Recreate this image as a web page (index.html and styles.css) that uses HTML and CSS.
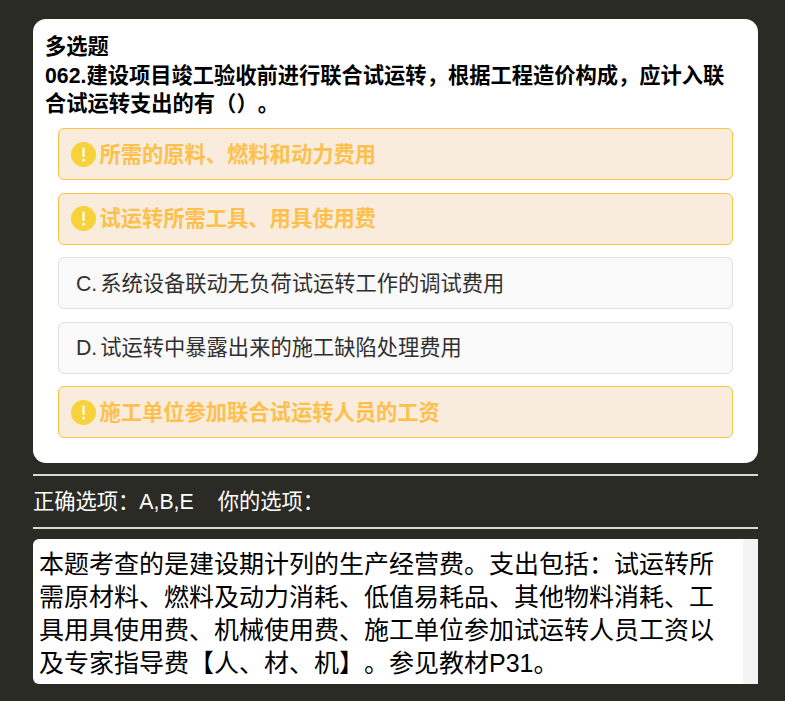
FILE: index.html
```html
<!DOCTYPE html>
<html lang="zh-CN">
<head>
<meta charset="utf-8">
<title>多选题</title>
<link rel="stylesheet" href="styles.css">
</head>
<body>
<main class="page">
  <section class="card">
    <div class="question">多选题<br>062.建设项目竣工验收前进行联合试运转，根据工程造价构成，应计入联合试运转支出的有（）。</div>
    <ul class="options">
      <li class="option correct"><svg class="icon" viewBox="0 0 25 25"><circle cx="12.5" cy="12.5" r="12.5" fill="#f8d23a"/><rect x="11.4" y="5.5" width="2.2" height="9.5" rx="1.1" fill="#fff"/><circle cx="12.5" cy="18.2" r="1.4" fill="#fff"/></svg><span>所需的原料、燃料和动力费用</span></li>
      <li class="option correct"><svg class="icon" viewBox="0 0 25 25"><circle cx="12.5" cy="12.5" r="12.5" fill="#f8d23a"/><rect x="11.4" y="5.5" width="2.2" height="9.5" rx="1.1" fill="#fff"/><circle cx="12.5" cy="18.2" r="1.4" fill="#fff"/></svg><span>试运转所需工具、用具使用费</span></li>
      <li class="option plain"><span><span class="letter">C.</span>系统设备联动无负荷试运转工作的调试费用</span></li>
      <li class="option plain"><span><span class="letter">D.</span>试运转中暴露出来的施工缺陷处理费用</span></li>
      <li class="option correct"><svg class="icon" viewBox="0 0 25 25"><circle cx="12.5" cy="12.5" r="12.5" fill="#f8d23a"/><rect x="11.4" y="5.5" width="2.2" height="9.5" rx="1.1" fill="#fff"/><circle cx="12.5" cy="18.2" r="1.4" fill="#fff"/></svg><span>施工单位参加联合试运转人员的工资</span></li>
    </ul>
  </section>
  <div class="answers"><span>正确选项：A,B,E</span><span>你的选项：</span></div>
  <section class="explain">
    <p class="explain-text">本题考查的是建设期计列的生产经营费。支出包括：试运转所需原材料、燃料及动力消耗、低值易耗品、其他物料消耗、工具用具使用费、机械使用费、施工单位参加试运转人员工资以及专家指导费【人、材、机】。参见教材P31。</p>
    <div class="scrollbar"></div>
  </section>
</main>
</body>
</html>
```
FILE: styles.css
```css
* { box-sizing: border-box; }
html, body { margin: 0; height: 100%; }
body {
  background: #2b2b25;
  font-family: "Liberation Sans", "Noto Sans CJK SC", sans-serif;
  overflow: hidden;
  text-spacing-trim: space-all;
  font-feature-settings: "chws" 0, "palt" 0, "kern" 0;
}
.page { width: 725px; margin-left: 33px; padding-top: 19px; }
.card {
  background: #fff;
  border-radius: 13px;
  height: 444px;
  padding: 14px 12px 0;
}
.question {
  font-size: 21.28px;
  font-weight: 700;
  line-height: 28.6px;
  color: #000;
  padding-right: 8px;
}
.options {
  list-style: none;
  margin: 9.6px 0 0;
  padding: 0 13px;
  display: flex;
  flex-direction: column;
  gap: 12.5px;
}
.option {
  height: 52px;
  border-radius: 6px;
  border: 1px solid;
  display: flex;
  align-items: center;
  font-size: 21.28px;
}
.correct {
  background: #f9ecdc;
  border-color: #fdc247;
  color: #fdc04d;
  font-weight: 700;
  padding: 0 0 0 12px;
}
.correct span, .plain > span { position: relative; top: -2px; }
.plain {
  background: #f9f9f9;
  border-color: #e0e0e0;
  color: #303030;
  padding-left: 17px;
}
.icon { width: 25px; height: 25px; margin-right: 3.5px; flex: none; }
.letter { margin-right: 3px; }
.answers {
  margin-top: 11px;
  height: 55px;
  padding-bottom: 4px;
  border-top: 2px solid #d8d8d4;
  border-bottom: 2px solid #d8d8d4;
  color: #fff;
  font-size: 21.28px;
  display: flex;
  align-items: center;
  gap: 24px;
}
.explain {
  margin-top: 10px;
  height: 145px;
  display: flex;
  background: #fff;
  border-radius: 6px 0 0 6px;
  overflow: hidden;
}
.explain-text {
  flex: 1;
  margin: 0;
  padding: 9px 6px 0;
  font-size: 25px;
  line-height: 33px;
  color: #000;
}
.scrollbar { width: 15px; background: #f3f3f3; flex: none; }
```
